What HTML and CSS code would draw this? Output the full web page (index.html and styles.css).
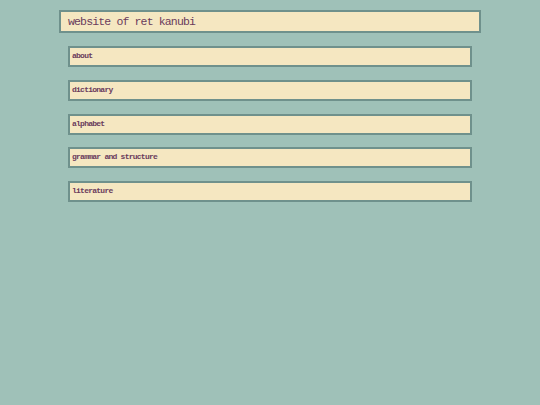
FILE: index.html
```html
<!DOCTYPE html>
<html>
<head>
<meta charset="utf-8">
<link rel="stylesheet" href="styles.css">
</head>
<body>
<div class="page">
  <header class="title">website of ret kanubi</header>
  <nav class="menu">
    <a class="item" href="#">about</a>
    <a class="item" href="#">dictionary</a>
    <a class="item" href="#">alphabet</a>
    <a class="item" href="#">grammar and structure</a>
    <a class="item" href="#">literature</a>
  </nav>
</div>
</body>
</html>
```
FILE: styles.css
```css
html, body {
  margin: 0;
  padding: 0;
  background: #9fc1b8;
}
body {
  font-family: "Liberation Mono", "DejaVu Sans Mono", monospace;
  color: #6a3b5c;
}
.page {
  display: flex;
  flex-direction: column;
  align-items: center;
  padding-top: 10px;
}
.title {
  box-sizing: border-box;
  width: 422px;
  height: 23px;
  background: #f5e7c1;
  border: 2px solid #6f918c;
  padding: 0 0 0 7px;
  font-size: 11.5px;
  line-height: 19px;
  letter-spacing: -0.85px;
}
.menu {
  display: flex;
  flex-direction: column;
  gap: 12.75px;
  margin-top: 13px;
}
.item {
  box-sizing: border-box;
  display: block;
  width: 404px;
  height: 21px;
  background: #f5e7c1;
  border: 2px solid #6f918c;
  padding: 0 0 0 2px;
  font-size: 8px;
  font-weight: bold;
  line-height: 16px;
  letter-spacing: -0.75px;
  color: #6a3b5c;
  text-decoration: none;
}
```
